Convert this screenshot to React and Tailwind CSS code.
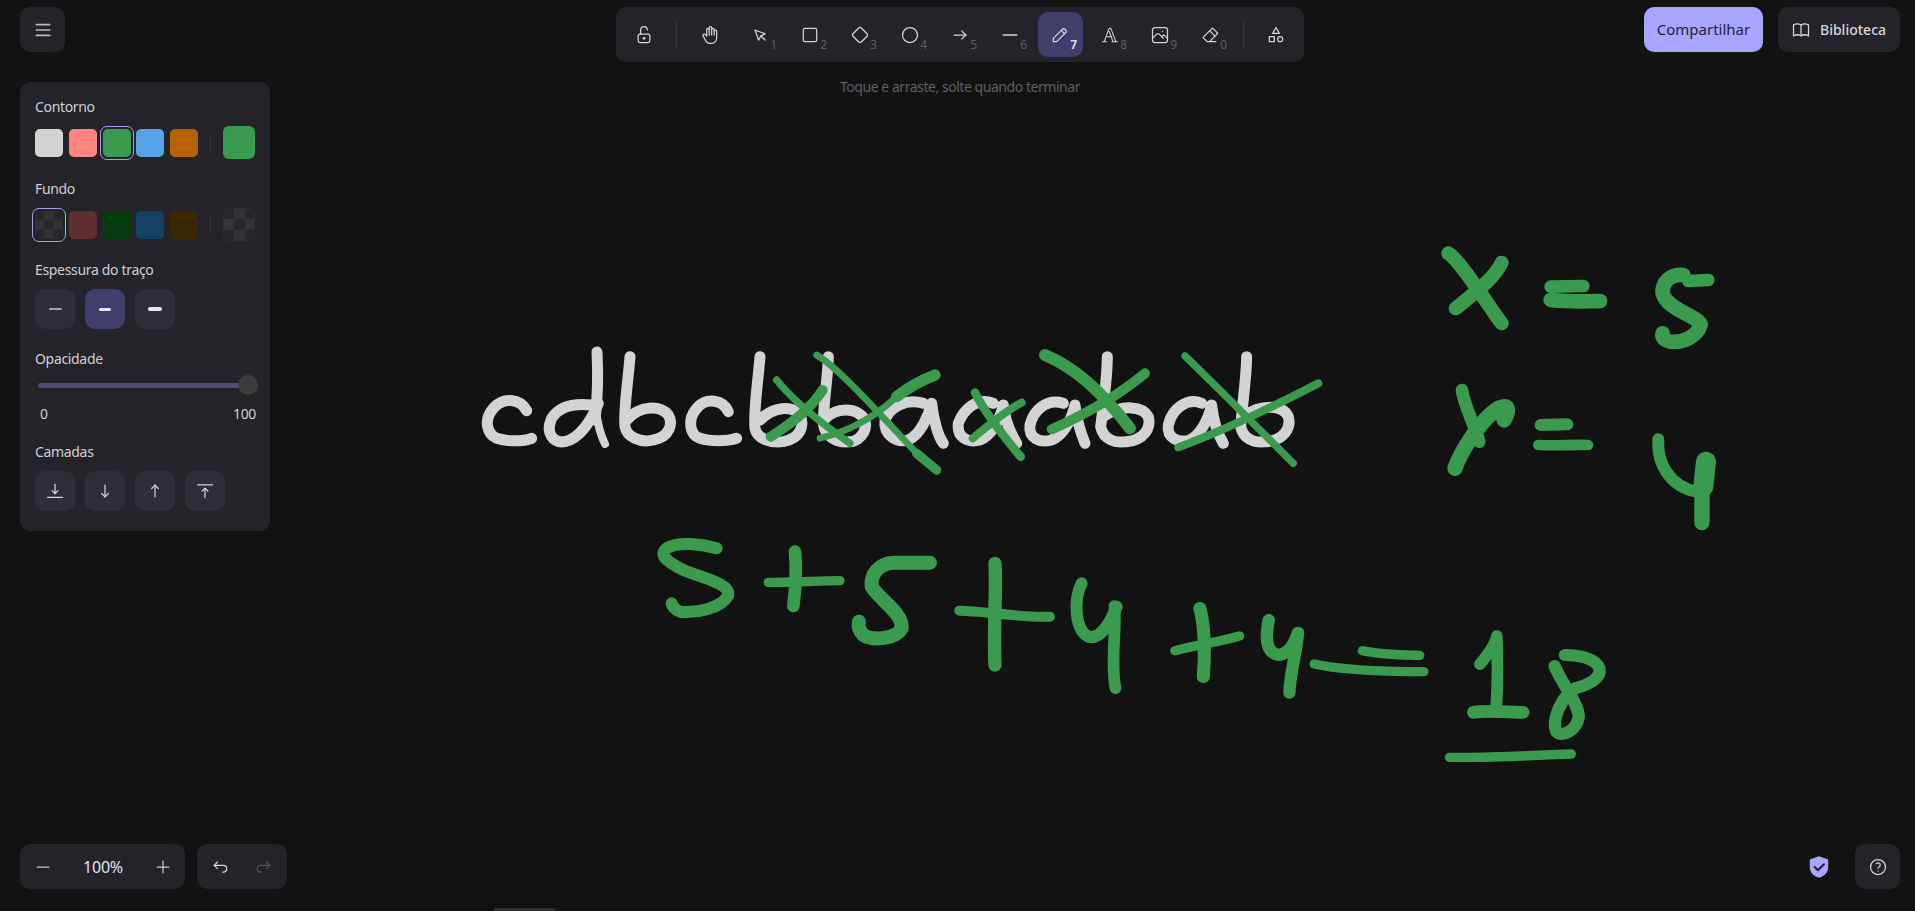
const WHITE = "#d3d3d3";
const GREEN = "#3a9b4e";

// strokes are written in the coordinates of a zoomed crop, each group gets its own origin
const whiteLeft = [
  "M170 212C150 175 100 170 70 205C40 240 50 280 80 295C110 305 160 305 185 295",
  "M365 195C320 190 270 195 245 235C225 280 250 310 285 305C330 295 365 240 385 190",
  "M480 50C475 120 460 210 465 260C470 290 510 310 550 300C600 290 610 250 595 225C570 195 510 195 470 240",
  "M775 215C760 180 710 170 680 205C650 240 660 285 690 295C720 305 770 305 800 295",
  "M870 50C865 120 850 210 855 265C860 295 900 310 940 305C990 295 1005 260 990 225C965 195 910 200 870 240",
  "M1075 50C1075 100 1060 190 1060 250C1065 290 1100 310 1140 305C1160 305 1195 280 1185 240C1160 200 1100 200 1060 240",
];
const whiteRight = [
  "M70 190C20 175 -30 200 -45 240C-50 285 -10 310 25 300C60 285 85 230 95 190C100 240 115 290 130 310",
  "M280 190C230 170 190 210 175 250C170 290 200 310 240 300C275 285 300 240 310 195C315 240 335 285 350 310",
  "M490 190C440 175 400 210 390 255C385 295 420 310 455 300C490 285 515 240 525 195C530 240 545 285 555 310",
  "M622 50C622 100 610 200 602 260C610 295 640 310 680 305C730 300 755 265 745 230C730 200 670 190 610 230",
  "M905 190C860 170 815 210 805 255C800 295 835 310 870 300C900 285 925 240 935 195C940 240 955 285 970 310",
  "M1040 50C1040 100 1030 170 1022 260C1030 295 1060 310 1100 305C1150 300 1175 265 1165 230C1150 195 1085 190 1030 230",
];

const crossLeft = [
  ["M920 120C960 170 1040 240 1140 310", 22],
  ["M902 290C950 260 1020 210 1058 150", 30],
  ["M1040 45C1100 80 1200 190 1350 350", 20],
  ["M1340 340L1400 390", 28],
  ["M1050 295C1150 270 1230 220 1290 160", 20],
  ["M1280 170C1330 130 1370 115 1395 105", 34],
];
const crossRight = [
  ["M225 158C250 210 320 300 362 350", 26],
  ["M218 295C260 260 320 210 365 188", 24],
  ["M435 45C520 80 610 160 690 265", 36],
  ["M455 268C540 230 650 170 735 100", 30],
  ["M855 48C930 120 1060 250 1180 370", 22],
  ["M835 322C950 280 1100 210 1255 130", 24],
];
const sumLeft = [
  ["M230 85C180 70 110 65 80 85C55 105 80 125 130 150C190 175 270 190 265 225C245 265 170 280 120 275C105 270 95 255 95 250", 36],
  ["M385 187C450 187 530 183 600 182", 28],
  ["M465 95C470 150 465 220 460 258", 38],
  ["M870 128L760 128C720 130 690 160 695 200C720 240 790 280 785 325C770 355 700 365 670 345C655 330 655 315 657 305", 42],
  ["M958 272C1030 272 1150 295 1230 290", 30],
  ["M1065 130C1070 200 1060 330 1065 435", 40],
  ["M1325 190C1300 240 1305 330 1345 350C1380 360 1410 310 1430 260", 36],
];
const sumRight = [
  ["M42 78C48 150 30 250 45 325", 34],
  ["M218 212C280 195 350 185 405 168", 28],
  ["M290 85C305 140 305 230 300 290", 38],
  ["M490 120C480 170 480 220 520 225C550 220 565 190 575 158C570 220 550 290 550 338", 36],
  ["M762 212C820 225 880 225 928 226", 28],
  ["M622 252C700 270 820 275 940 275", 28],
  ["M1103 253C1125 225 1150 190 1152 168C1155 250 1155 320 1150 385", 34],
  ["M1085 397C1130 390 1190 397 1228 397", 38],
  ["M1320 258C1340 310 1390 370 1390 410C1385 450 1340 475 1325 455C1310 420 1340 350 1380 325C1430 310 1455 290 1450 265C1440 235 1390 225 1350 225", 36],
  ["M1015 532C1130 535 1260 525 1368 522", 28],
];
const values = [
  ["M85 70C120 90 200 220 245 280", 42],
  ["M245 98C220 150 150 200 107 235", 42],
  ["M392 170L490 168", 38],
  ["M392 210C440 215 490 215 540 213", 44],
  ["M865 150L805 153", 38],
  ["M790 135C750 130 725 160 728 190C740 240 840 260 842 285C830 320 790 340 750 335C730 330 725 320 728 310", 44],
  ["M126 480C130 520 165 590 178 635", 38],
  ["M105 715C120 670 180 570 235 535C255 525 265 530 262 545C260 560 255 565 252 570", 46],
  ["M362 585L442 583", 36],
  ["M355 645C400 648 460 643 504 645", 32],
  ["M715 628C710 700 750 770 830 785", 36],
  ["M858 695L850 770", 60],
  ["M846 780L846 878", 46],
];

const Strokes = ({ x, y, items, color = GREEN, width, sx = 0.3333 }) => (
  <g transform={`translate(${x} ${y}) scale(${sx} 0.3333)`} stroke={color} fill="none" strokeLinecap="round" strokeLinejoin="round">
    {items.map((s, i) =>
      typeof s === "string" ? (
        <path key={i} d={s} strokeWidth={width} />
      ) : (
        <path key={i} d={s[0]} strokeWidth={s[1]} />
      )
    )}
  </g>
);

const Icon = ({ children, size = 20, width = 1.5, className = "" }) => (
  <svg width={size} height={size} viewBox="0 0 24 24" fill="none" stroke="currentColor" strokeWidth={width} strokeLinecap="round" strokeLinejoin="round" className={className}>
    {children}
  </svg>
);

const tools = [
  { key: "1", icon: <><path d="M6 6l4.153 11.793a.365 .365 0 0 0 .331 .207a.366 .366 0 0 0 .332 -.207l2.184 -4.793l4.787 -1.994a.355 .355 0 0 0 .213 -.323a.355 .355 0 0 0 -.213 -.323l-11.787 -4.36z" /><path d="M13.5 13.5l4.5 4.5" /></> },
  { key: "2", icon: <rect x="4" y="4" width="16" height="16" rx="2" /> },
  { key: "3", icon: <path d="M10.5 20.4l-6.9 -6.9c-.781 -.781 -.781 -2.219 0 -3l6.9 -6.9c.781 -.781 2.219 -.781 3 0l6.9 6.9c.781 .781 .781 2.219 0 3l-6.9 6.9c-.781 .781 -2.219 .781 -3 0z" /> },
  { key: "4", icon: <circle cx="12" cy="12" r="9" /> },
  { key: "5", icon: <><path d="M5 12h14" /><path d="M14 17l5 -5" /><path d="M14 7l5 5" /></> },
  { key: "6", icon: <path d="M4 12h16" strokeWidth="2" /> },
  { key: "7", active: true, icon: <><path d="M4 20h4l10.5 -10.5a2.828 2.828 0 0 0 -4 -4l-10.5 10.5v4" /><path d="M13.5 6.5l4 4" /></> },
  { key: "8", icon: <g strokeWidth="1.25"><path d="M3 20h5" /><path d="M14.5 20h6.5" /><path d="M5 20l6 -16h2l6 16" /><path d="M11 7.5l4.5 12.5" /><path d="M8 14h6" /></g> },
  { key: "9", icon: <><path d="M15 8h.01" /><path d="M3 6a3 3 0 0 1 3 -3h12a3 3 0 0 1 3 3v12a3 3 0 0 1 -3 3h-12a3 3 0 0 1 -3 -3v-12z" /><path d="M3 16l5 -5c.928 -.893 2.072 -.893 3 0l5 5" /><path d="M14 14l1 -1c.928 -.893 2.072 -.893 3 0l3 3" /></> },
  { key: "0", icon: <><path d="M19 20h-10.5l-4.21 -4.3a1 1 0 0 1 0 -1.41l10 -10a1 1 0 0 1 1.41 0l5 5a1 1 0 0 1 0 1.41l-9.2 9.3" /><path d="M18 13.3l-6.3 -6.3" /></> },
];

const Tool = ({ tool }) => (
  <button className={`relative flex h-[45px] w-[45px] items-center justify-center rounded-[10px] text-[#d4d4da] ${tool.active ? "bg-[#403e6a]" : ""}`}>
    <Icon className="-translate-x-px">{tool.icon}</Icon>
    <span className={`absolute bottom-[5px] right-[6px] text-[12px] leading-[14px] ${tool.active ? "font-bold text-[#d4d4da]" : "text-[#5e5e68]"}`}>
      {tool.key}
    </span>
  </button>
);

const Divider = ({ className }) => <div className={`w-px bg-[#33333d] ${className}`} />;

const checkerSmall = "bg-[conic-gradient(#33333a_25%,#26262c_0_50%,#33333a_0_75%,#26262c_0)] bg-[length:18px_18px] bg-[position:9.5px_9.5px]";
const checkerBig = "border border-[#2c2c33] bg-[conic-gradient(#33333a_25%,#26262c_0_50%,#33333a_0_75%,#26262c_0)] bg-[length:22px_22px] bg-[position:10px_10px]";

const Swatch = ({ className, selected }) => (
  <div className="relative h-[28px] w-[28px]">
    <div className={`h-full w-full rounded-[5px] ${className}`} />
    {selected && <div className="absolute -inset-[3px] rounded-[7px] border border-[#a3a1e6]" />}
  </div>
);

const Label = ({ children, className = "" }) => (
  <div className={`text-[14px] leading-[20px] tracking-[-0.33px] text-[#cfcfd4] ${className}`}>{children}</div>
);

const SwatchRow = ({ colors, big, selected }) => (
  <div className="flex items-center">
    <div className="flex gap-[5.75px]">
      {colors.map((c, i) => (
        <Swatch key={i} className={c} selected={i === selected} />
      ))}
    </div>
    <Divider className="ml-[12px] h-[20px]" />
    <div className={`ml-[12px] h-[33px] w-[32px] rounded-[6px] ${big}`} />
  </div>
);

const SquareButton = ({ children, active }) => (
  <button className={`flex h-[40px] w-[40px] items-center justify-center rounded-[10px] text-[#d4d4da] ${active ? "bg-[#403e6a]" : "bg-[#2e2d39]"}`}>
    {children}
  </button>
);

const Panel = () => (
  <div className="w-[250px] rounded-[10px] bg-[#232329] px-[15px] pb-[20px] pt-[15px]">
    <Label>Contorno</Label>
    <div className="mt-[9px] h-[33px]">
      <SwatchRow
        colors={["bg-[#d3d3d3]", "bg-[#ff8383]", "bg-[#3a9b4e]", "bg-[#56a2e8]", "bg-[#b76100]"]}
        big="bg-[#3a9b4e]"
        selected={2}
      />
    </div>
    <Label className="mt-[20px]">Fundo</Label>
    <div className="mt-[9px] h-[33px]">
      <SwatchRow
        colors={[checkerSmall, "bg-[#5f2f2f]", "bg-[#043b0c]", "bg-[#154163]", "bg-[#3a2600]"]}
        big={checkerBig}
        selected={0}
      />
    </div>
    <Label className="mt-[19px]">Espessura do traço</Label>
    <div className="mt-[9px] flex gap-[10px]">
      <SquareButton><div className="h-[2px] w-[13px] rounded bg-[#a0a0a6]" /></SquareButton>
      <SquareButton active><div className="h-[3px] w-[12px] rounded bg-[#e6e6fa]" /></SquareButton>
      <SquareButton><div className="h-[4px] w-[14px] rounded bg-[#e6e6ea]" /></SquareButton>
    </div>
    <Label className="mt-[20px]">Opacidade</Label>
    <div className="relative mt-[6px] flex h-[20px] items-center px-[3px]">
      <div className="h-[5px] w-full rounded-full bg-[#4f4c78]" />
      <div className="absolute right-[-3px] top-0 h-[20px] w-[20px] rounded-full bg-[#3d3d3d]" />
    </div>
    <div className="mt-[9px] flex justify-between pl-[5px] text-[14px] leading-[20px] tracking-[-0.33px] text-[#cfcfd4]">
      <span>0</span>
      <span className="-mr-px">100</span>
    </div>
    <Label className="mt-[18px]">Camadas</Label>
    <div className="mt-[9px] flex gap-[10px]">
      <SquareButton><Icon><path d="M12 4v11" /><path d="M8.5 11.5l3.5 3.5l3.5 -3.5" /><path d="M3 19.5h18" /></Icon></SquareButton>
      <SquareButton><Icon><path d="M12 5v14" /><path d="M8 15l4 4l4 -4" /></Icon></SquareButton>
      <SquareButton><Icon><path d="M12 19v-14" /><path d="M8 9l4 -4l4 4" /></Icon></SquareButton>
      <SquareButton><Icon><path d="M3 4.5h18" /><path d="M12 20v-11" /><path d="M8.5 12l3.5 -3.5l3.5 3.5" /></Icon></SquareButton>
    </div>
  </div>
);

const Toolbar = () => (
  <div className="flex h-[55px] w-[688px] items-center rounded-[10px] bg-[#232329] px-[5px]">
    <button className="flex h-[45px] w-[45px] items-center justify-center text-[#d4d4da]">
      <Icon><rect x="5" y="11" width="14" height="10" rx="2" /><circle cx="12" cy="16" r="1" /><path d="M8 11v-5a4 4 0 0 1 8 0" /></Icon>
    </button>
    <Divider className="ml-[10px] h-[30px]" />
    <button className="ml-[11px] flex h-[45px] w-[45px] items-center justify-center text-[#d4d4da]">
      <Icon className="-translate-x-px">
        <path d="M8 13v-7.5a1.5 1.5 0 0 1 3 0v6.5" />
        <path d="M11 5.5v-2a1.5 1.5 0 1 1 3 0v8.5" />
        <path d="M14 5.5a1.5 1.5 0 0 1 3 0v6.5" />
        <path d="M17 7.5a1.5 1.5 0 0 1 3 0v8.5a6 6 0 0 1 -6 6h-2h.208a6 6 0 0 1 -5.012 -2.7a69.74 69.74 0 0 1 -.196 -.3c-.312 -.479 -1.407 -2.388 -3.286 -5.728a1.5 1.5 0 0 1 .536 -2.022a1.867 1.867 0 0 1 2.28 .28l1.47 1.47" />
      </Icon>
    </button>
    <div className="ml-[5px] flex gap-[5px]">
      {tools.map((t) => (
        <Tool key={t.key} tool={t} />
      ))}
    </div>
    <Divider className="ml-[10px] h-[30px]" />
    <button className="ml-[10px] flex h-[45px] w-[45px] items-center justify-center text-[#d4d4da]">
      <Icon className="-translate-x-px"><path d="M12 3l-4 7h8z" /><circle cx="17" cy="17" r="3" /><path d="M4 14h6v6h-6z" /></Icon>
    </button>
  </div>
);

export default function App() {
  return (
    <div className="relative flex h-screen flex-col overflow-hidden bg-[#121212] font-['Noto_Sans',sans-serif]">
      <svg className="pointer-events-none absolute inset-0 h-full w-full">
        <Strokes x={470} y={340} items={whiteLeft} color={WHITE} width={33} />
        <Strokes x={900} y={340} items={whiteRight} color={WHITE} width={33} />
        <path d="M597 352C598 370 598 395 595 420" stroke={WHITE} strokeWidth="11" fill="none" strokeLinecap="round" />
        <path d="M596 410C598 428 602 438 605 444" stroke={WHITE} strokeWidth="8" fill="none" strokeLinecap="round" />
        <Strokes x={470} y={340} items={crossLeft} />
        <Strokes x={900} y={340} items={crossRight} />
        <Strokes x={640} y={520} items={sumLeft} />
        <Strokes x={1100} y={580} items={sumRight} sx={0.3444} />
        <Strokes x={1420} y={230} items={values} />
      </svg>

      <div className="relative flex flex-1 items-start pl-5 pr-[15px] pt-[7px]">
        <div className="flex w-[250px] flex-col gap-[30px]">
          <button className="flex h-[45px] w-[45px] items-center justify-center rounded-[10px] bg-[#232329] text-[#b8b8be]">
            <Icon width={2}><path d="M4 5.5h16" /><path d="M4 12h16" /><path d="M4 18.5h16" /></Icon>
          </button>
          <Panel />
        </div>

        <div className="ml-[346px] flex flex-col items-center">
          <Toolbar />
          <div className="mt-[15px] text-[14px] leading-[20px] tracking-[-0.45px] text-[#5f5f66]">Toque e arraste, solte quando terminar</div>
        </div>

        <div className="ml-auto flex gap-[15px]">
          <button className="h-[45px] w-[119px] rounded-[10px] bg-[#a8a5ff] text-[15px] text-[#23223f]">Compartilhar</button>
          <button className="flex h-[45px] w-[122px] items-center rounded-[10px] bg-[#232329] pl-[13px] text-[14px] font-medium text-[#d6d6dc]">
            <Icon><path d="M3 19a9 9 0 0 1 9 0a9 9 0 0 1 9 0" /><path d="M3 6a9 9 0 0 1 9 0a9 9 0 0 1 9 0" /><path d="M3 6v13" /><path d="M12 6v13" /><path d="M21 6v13" /></Icon>
            <span className="ml-[9px]">Biblioteca</span>
          </button>
        </div>
      </div>

      <div className="relative flex items-center pb-[22px] pl-5 pr-[15px]">
        <div className="flex h-[45px] w-[165px] items-center justify-between rounded-[10px] bg-[#232329] pl-[13px] pr-[12px] text-[#c8c8ce]">
          <Icon><path d="M5 12h14" /></Icon>
          <span className="text-[16px] tracking-[-0.2px] text-[#e3e3e8]">100%</span>
          <Icon><path d="M12 5v14" /><path d="M5 12h14" /></Icon>
        </div>
        <div className="ml-[12px] flex h-[45px] w-[90px] items-center justify-between rounded-[10px] bg-[#232329] px-[13px]">
          <span className="text-[#d4d4da]"><Icon><path d="M9 14l-4 -4l4 -4" /><path d="M5 10h11a4 4 0 1 1 0 8h-1" /></Icon></span>
          <span className="text-[#55555c]"><Icon><path d="M15 14l4 -4l-4 -4" /><path d="M19 10h-11a4 4 0 1 0 0 8h1" /></Icon></span>
        </div>
        <svg width="26" height="26" viewBox="0 0 24 24" className="ml-auto">
          <path d="M12 2l8.5 3v7c0 5 -3.5 8.5 -8.5 10c-5 -1.5 -8.5 -5 -8.5 -10v-7z" fill="#a8a5ff" />
          <path d="M8 12l3 3l5.5 -5.5" fill="none" stroke="#23223f" strokeWidth="2" strokeLinecap="round" strokeLinejoin="round" />
        </svg>
        <button className="ml-[23px] flex h-[45px] w-[45px] items-center justify-center rounded-[10px] bg-[#232329] text-[#d4d4da]">
          <Icon><circle cx="12" cy="12" r="9" /><path d="M12 17v.01" /><path d="M12 13.5a1.5 1.5 0 0 1 1 -1.5a2.6 2.6 0 1 0 -3 -4" /></Icon>
        </button>
      </div>

      <div className="absolute bottom-0 left-[494px] h-[3px] w-[61px] bg-[#2e2e2e]" />
    </div>
  );
}
